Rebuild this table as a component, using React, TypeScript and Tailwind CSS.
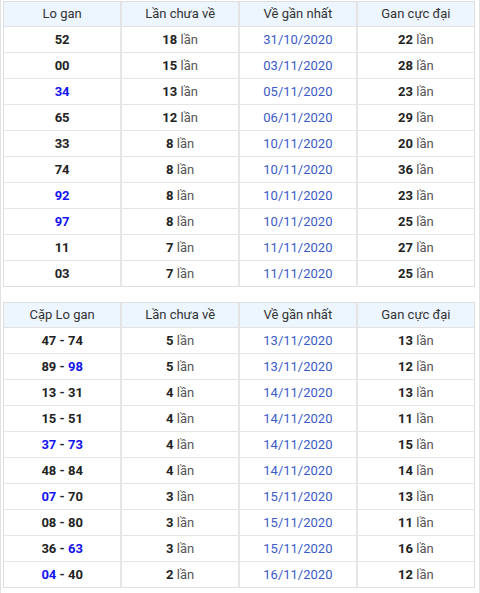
const loGan = [
  { so: [{ v: "52" }], lan: 18, ngay: "31/10/2020", max: 22 },
  { so: [{ v: "00" }], lan: 15, ngay: "03/11/2020", max: 28 },
  { so: [{ v: "34", blue: true }], lan: 13, ngay: "05/11/2020", max: 23 },
  { so: [{ v: "65" }], lan: 12, ngay: "06/11/2020", max: 29 },
  { so: [{ v: "33" }], lan: 8, ngay: "10/11/2020", max: 20 },
  { so: [{ v: "74" }], lan: 8, ngay: "10/11/2020", max: 36 },
  { so: [{ v: "92", blue: true }], lan: 8, ngay: "10/11/2020", max: 23 },
  { so: [{ v: "97", blue: true }], lan: 8, ngay: "10/11/2020", max: 25 },
  { so: [{ v: "11" }], lan: 7, ngay: "11/11/2020", max: 27 },
  { so: [{ v: "03" }], lan: 7, ngay: "11/11/2020", max: 25 },
];

const capLoGan = [
  { so: [{ v: "47" }, { v: "74" }], lan: 5, ngay: "13/11/2020", max: 13 },
  { so: [{ v: "89" }, { v: "98", blue: true }], lan: 5, ngay: "13/11/2020", max: 12 },
  { so: [{ v: "13" }, { v: "31" }], lan: 4, ngay: "14/11/2020", max: 13 },
  { so: [{ v: "15" }, { v: "51" }], lan: 4, ngay: "14/11/2020", max: 11 },
  { so: [{ v: "37", blue: true }, { v: "73", blue: true }], lan: 4, ngay: "14/11/2020", max: 15 },
  { so: [{ v: "48" }, { v: "84" }], lan: 4, ngay: "14/11/2020", max: 14 },
  { so: [{ v: "07", blue: true }, { v: "70" }], lan: 3, ngay: "15/11/2020", max: 13 },
  { so: [{ v: "08" }, { v: "80" }], lan: 3, ngay: "15/11/2020", max: 11 },
  { so: [{ v: "36" }, { v: "63", blue: true }], lan: 3, ngay: "15/11/2020", max: 16 },
  { so: [{ v: "04", blue: true }, { v: "40" }], lan: 2, ngay: "16/11/2020", max: 12 },
];

type Row = (typeof loGan)[number];

function Lan({ n }: { n: number }) {
  return (
    <>
      <b className="font-bold text-[#222]">{n}</b>{" "}
      <span className="text-[#555]">lần</span>
    </>
  );
}

function GanTable({ first, rows }: { first: string; rows: Row[] }) {
  const th = "h-[25px] border-x-2 border-b border-[#e3e3e3] font-normal text-[#333] first:border-l-0 last:border-r-0";
  const td = "h-[26px] border-x-2 border-t border-[#e6e6e6] first:border-l-0 last:border-r-0";
  return (
    <table className="w-[472px] table-fixed border-collapse border border-[#dedede] text-center text-[13px]">
      <thead className="bg-[#edf5fe]">
        <tr>
          <th className={th}>{first}</th>
          <th className={th}>Lần chưa về</th>
          <th className={th}>Về gần nhất</th>
          <th className={th}>Gan cực đại</th>
        </tr>
      </thead>
      <tbody>
        {rows.map((r, i) => (
          <tr key={i}>
            <td className={td + " font-bold"}>
              {r.so.map((s, j) => (
                <span key={j}>
                  {j > 0 && <span className="text-[#222]"> - </span>}
                  <span className={s.blue ? "text-[#1414f0]" : "text-[#222]"}>{s.v}</span>
                </span>
              ))}
            </td>
            <td className={td}>
              <Lan n={r.lan} />
            </td>
            <td className={td + " text-[#3a5bc7]"}>{r.ngay}</td>
            <td className={td}>
              <Lan n={r.max} />
            </td>
          </tr>
        ))}
      </tbody>
    </table>
  );
}

export default function App() {
  return (
    <div className="h-[593px] w-[480px] overflow-hidden border-x border-[#e2e2e2] bg-white pl-[2px] pt-px font-['Roboto',sans-serif]">
      <div className="flex flex-col gap-[15px]">
        <GanTable first="Lo gan" rows={loGan} />
        <GanTable first="Cặp Lo gan" rows={capLoGan} />
      </div>
    </div>
  );
}
